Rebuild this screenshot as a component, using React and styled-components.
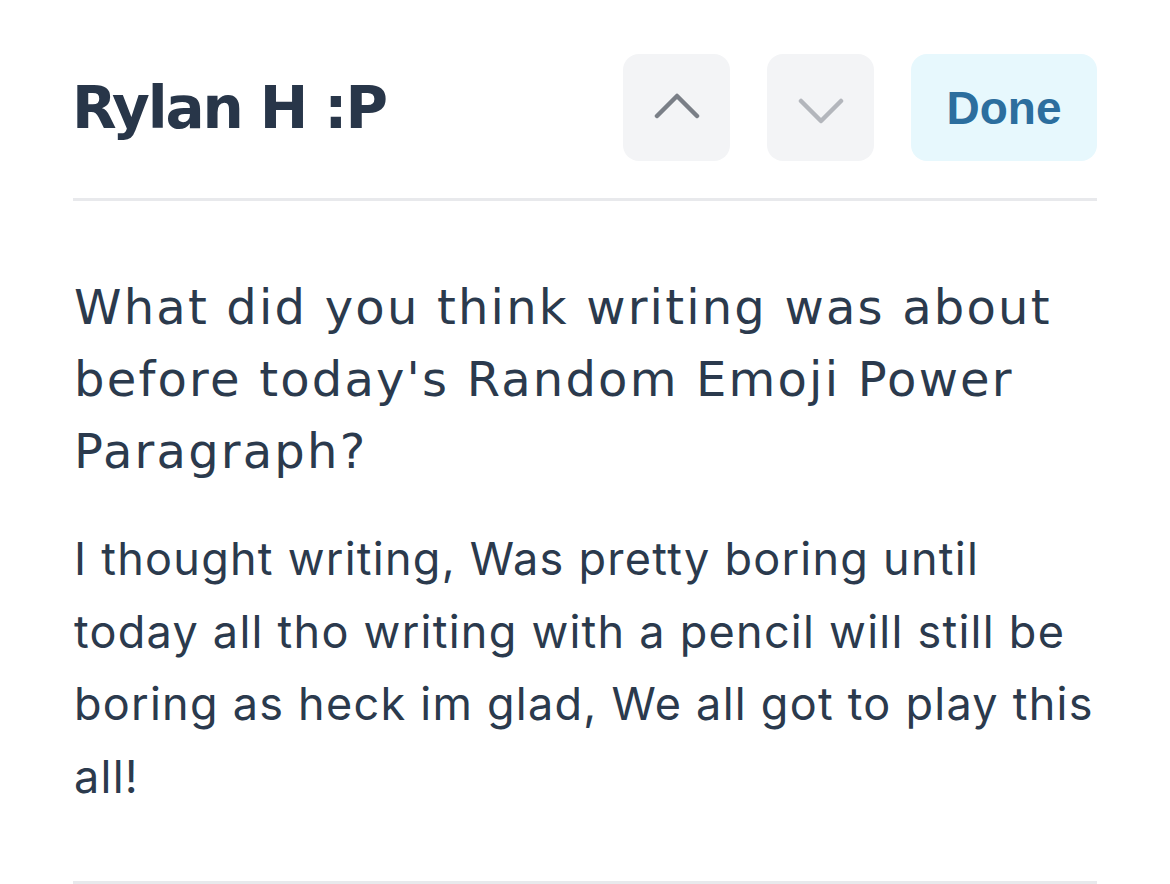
import React from "react";
import styled, { createGlobalStyle } from "styled-components";

const GlobalStyle = createGlobalStyle`
  body {
    margin: 0;
    background: #ffffff;
    font-family: "Inter", "Liberation Sans", sans-serif;
  }
`;

const Page = styled.div`
  width: 1024px;
  margin-left: 73px;
  padding-top: 54px;
`;

const Header = styled.header`
  display: flex;
  align-items: center;
  justify-content: space-between;
  padding-bottom: 37px;
  border-bottom: 3px solid #e8e9ec;
`;

const Title = styled.h1`
  margin: 0 0 0 -1px;
  font-family: "DejaVu Sans", sans-serif;
  font-weight: 700;
  font-size: 58px;
  color: #283649;
  letter-spacing: -2.1px;
`;

const Actions = styled.div`
  display: flex;
  gap: 37px;
`;

const IconButton = styled.button`
  width: 107px;
  height: 107px;
  border: none;
  border-radius: 16px;
  background: #f3f4f6;
  display: flex;
  align-items: center;
  justify-content: center;
  padding: 0;
  color: ${(p) => (p.disabled ? "#b3b6bc" : "#7a7f87")};
`;

const DoneButton = styled.button`
  width: 186px;
  height: 107px;
  border: none;
  border-radius: 16px;
  background: #e7f8fd;
  color: #2c6e9e;
  font-family: "Liberation Sans", Arial, sans-serif;
  font-weight: 700;
  font-size: 46px;
  padding: 0;
`;

const Body = styled.section`
  padding: 70px 0 0 1px;
  border-bottom: 3px solid #e8e9ec;
  height: 683px;
  box-sizing: border-box;
`;

const Question = styled.p`
  margin: 0;
  font-family: "DejaVu Sans", sans-serif;
  font-size: 48px;
  line-height: 72px;
  letter-spacing: 2.2px;
  color: #2b3a4d;
`;

const Answer = styled.p`
  margin: 36px -6px 0 0;
  font-family: "Inter", sans-serif;
  font-size: 45px;
  line-height: 72.5px;
  letter-spacing: 1.25px;
  color: #2b3a4d;
`;

// up chevron sits a little above centre, down a little below, as in the app
const Chevron = ({ dir }) => (
  <svg
    width="46"
    height="26"
    viewBox="0 0 46 26"
    fill="none"
    style={{ marginTop: dir === "up" ? -4 : 6 }}
  >
    <path
      d={dir === "up" ? "M3 23 L23 3 L43 23" : "M3 3 L23 23 L43 3"}
      stroke="currentColor"
      strokeWidth="4.5"
      strokeLinecap="round"
      strokeLinejoin="round"
    />
  </svg>
);

export default function App() {
  return (
    <>
      <GlobalStyle />
      <Page>
        <Header>
          <Title>Rylan H :P</Title>
          <Actions>
            <IconButton aria-label="Previous">
              <Chevron dir="up" />
            </IconButton>
            <IconButton aria-label="Next" disabled>
              <Chevron dir="down" />
            </IconButton>
            <DoneButton>Done</DoneButton>
          </Actions>
        </Header>
        <Body>
          <Question>
            What did you think writing was about before today's Random Emoji
            Power Paragraph?
          </Question>
          <Answer>
            I thought writing, Was pretty boring until today all tho writing
            with a pencil will still be boring as heck im glad, We all got to
            play this all!
          </Answer>
        </Body>
      </Page>
    </>
  );
}
